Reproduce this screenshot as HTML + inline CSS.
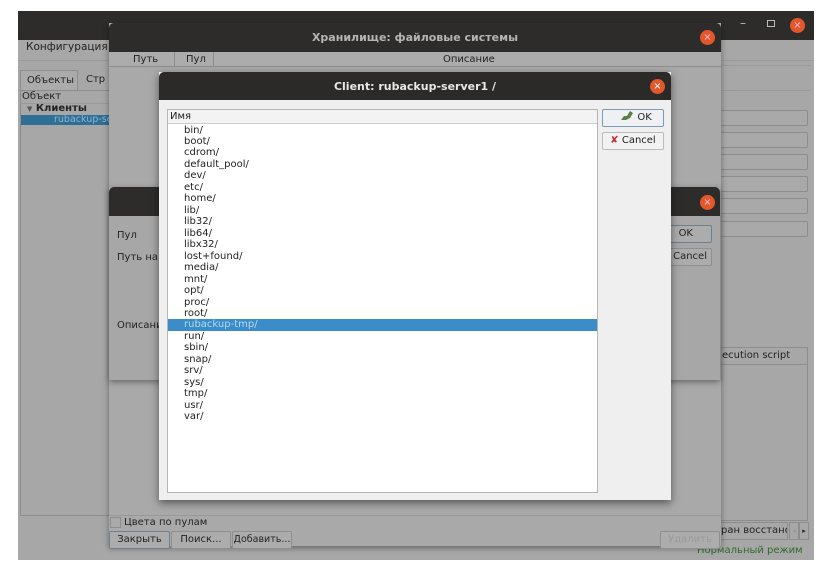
<!DOCTYPE html>
<html><head><meta charset="utf-8"><style>
*{box-sizing:border-box;margin:0;padding:0;white-space:nowrap}
body{width:828px;height:575px;background:#fff;position:relative;overflow:hidden;font-family:"DejaVu Sans","Liberation Sans",sans-serif;font-size:10px;color:#222}
.a{position:absolute}
.dark{background:#2d2c2b}
.x{position:absolute;width:15px;height:15px;border-radius:50%;background:#e3582a;color:#fbd;font-size:10px;line-height:15px;text-align:center}
.fld{position:absolute;left:718px;width:90px;height:16px;border:1px solid #8d8d8d;background:#a9a9a9;border-radius:2px}
.btn{position:absolute;height:18px;border:1px solid #8f8f8f;border-radius:2px;background:#acacac;text-align:center;line-height:16px;overflow:hidden}
.row{height:11.48px;line-height:11.48px;padding-left:16px;font-size:10px;color:#222}
</style></head><body>
<div class="a" style="left:18px;top:11px;width:796px;height:549px;background:#a7a7a7"></div>
<div class="a dark" style="left:18px;top:11px;width:796px;height:29px"></div>
<div class="a" style="left:740px;top:16px;color:#bbb;font-size:12px">–</div>
<div class="a" style="left:767px;top:20px;width:8px;height:7px;border:1px solid #bbb"></div>
<div class="x" style="left:790px;top:18px">×</div>
<div class="a" style="left:26px;top:41px;font-size:10.5px">Конфигурация</div>
<div class="a" style="left:18px;top:60px;width:796px;height:1px;background:#999"></div>
<div class="a" style="left:20px;top:70px;width:58px;height:20px;border:1px solid #8d8d8d;border-bottom:none;background:#ababab;padding:4px 0 0 6px">Объекты</div>
<div class="a" style="left:86px;top:74px">Стр</div>
<div class="a" style="left:20px;top:90px;width:90px;height:426px;border:1px solid #8d8d8d"></div>
<div class="a" style="left:22px;top:91px">Объект</div>
<div class="a" style="left:20px;top:103px;width:90px;height:1px;background:#999"></div>
<div class="a" style="left:27px;top:103px;font-weight:bold"><span style="font-size:7px;color:#555">▼</span> Клиенты</div>
<div class="a" style="left:21px;top:115px;width:89px;height:10px;background:#2f6f95;color:#8db4d0;padding-left:33px;line-height:10px;font-size:9.5px;overflow:hidden">rubackup-se</div>
<div class="a" style="left:718px;top:65px;width:92px;height:1px;background:#999"></div>
<div class="a" style="left:718px;top:90px;width:92px;height:1px;background:#999"></div>
<div class="fld" style="top:110px"></div><div class="fld" style="top:132px"></div><div class="fld" style="top:154px"></div><div class="fld" style="top:176px"></div><div class="fld" style="top:198px"></div><div class="fld" style="top:221px"></div>
<div class="a" style="left:718px;top:347px;width:90px;height:18px;border:1px solid #8d8d8d;padding:2px 0 0 3px;font-size:10px;overflow:hidden">ecution script</div>
<div class="a" style="left:718px;top:365px;width:90px;height:156px;border:1px solid #8d8d8d;border-top:none"></div>
<div class="a" style="left:718px;top:522px;width:70px;height:18px;border:1px solid #8d8d8d;padding:2px 0 0 2px;overflow:hidden">ран восстанов</div>
<div class="a" style="left:789px;top:522px;width:10px;height:18px;border:1px solid #8d8d8d;font-size:7px;color:#999;text-align:center;line-height:16px">◂</div>
<div class="a" style="left:799px;top:522px;width:10px;height:18px;border:1px solid #8d8d8d;font-size:7px;text-align:center;line-height:16px">▸</div>
<div class="a" style="left:697px;top:545px;color:#2e6b2e">Нормальный режим</div>

<div class="a" style="left:109px;top:23px;width:612px;height:523px;background:#a9a9a9;box-shadow:0 2px 6px rgba(0,0,0,.4)"></div>
<div class="a dark" style="left:109px;top:23px;width:612px;height:29px;border-radius:5px 5px 0 0"></div>
<div class="a" style="left:109px;top:31px;width:612px;text-align:center;color:#b5b5b5;font-weight:bold;font-size:11px">Хранилище: файловые системы</div>
<div class="x" style="left:700px;top:30px">×</div>
<div class="a" style="left:109px;top:52px;width:612px;height:15px;background:#acacac;border-bottom:1px solid #8d8d8d"></div>
<div class="a" style="left:133px;top:54px">Путь</div>
<div class="a" style="left:174px;top:52px;width:1px;height:15px;background:#8d8d8d"></div>
<div class="a" style="left:186px;top:54px">Пул</div>
<div class="a" style="left:213px;top:52px;width:1px;height:15px;background:#8d8d8d"></div>
<div class="a" style="left:443px;top:54px">Описание</div>
<div class="a" style="left:109px;top:515px;width:612px;height:1px;background:#999"></div>
<div class="a" style="left:110px;top:517px;width:11px;height:11px;border:1px solid #8d8d8d"></div>
<div class="a" style="left:124px;top:517px">Цвета по пулам</div>
<div class="btn" style="left:109px;top:531px;width:61px;border-color:#6f7f8c">Закрыть</div>
<div class="btn" style="left:171px;top:531px;width:60px">Поиск...</div>
<div class="btn" style="left:232px;top:531px;width:60px;font-size:9.5px">Добавить...</div>
<div class="btn" style="left:660px;top:531px;width:60px;color:#999">Удалить</div>

<div class="a" style="left:109px;top:187px;width:611px;height:193px;background:#a7a7a7;box-shadow:0 2px 6px rgba(0,0,0,.4)"></div>
<div class="a dark" style="left:109px;top:187px;width:611px;height:29px;border-radius:5px 5px 0 0"></div>
<div class="x" style="left:700px;top:195px">×</div>
<div class="a" style="left:117px;top:230px">Пул</div>
<div class="a" style="left:117px;top:252px">Путь на</div>
<div class="a" style="left:117px;top:320px">Описани</div>
<div class="btn" style="left:655px;top:225px;width:57px;border-color:#6f7f8c;text-align:right;padding-right:18px">OK</div>
<div class="btn" style="left:655px;top:248px;width:57px;text-align:right;padding-right:4px">Cancel</div>

<div class="a" style="left:159px;top:72px;width:512px;height:428px;background:#efefef;box-shadow:0 3px 8px rgba(0,0,0,.5)"></div>
<div class="a" style="left:159px;top:72px;width:512px;height:28px;background:#2b2a29;border-radius:5px 5px 0 0"></div>
<div class="a" style="left:159px;top:80px;width:512px;text-align:center;color:#e8e8e8;font-weight:bold;font-size:11px">Client: rubackup-server1 /</div>
<div class="x" style="left:650px;top:79px;color:#fff">×</div>
<div class="a" style="left:167px;top:109px;width:431px;height:384px;background:#fff;border:1px solid #b5b5b5"></div>
<div class="a" style="left:168px;top:110px;width:429px;height:14px;background:#f3f3f3;border-bottom:1px solid #ccc;padding:1px 0 0 2px">Имя</div>
<div class="a" style="left:168px;top:124.5px;width:429px">
<div class="row">bin/</div>
<div class="row">boot/</div>
<div class="row">cdrom/</div>
<div class="row">default_pool/</div>
<div class="row">dev/</div>
<div class="row">etc/</div>
<div class="row">home/</div>
<div class="row">lib/</div>
<div class="row">lib32/</div>
<div class="row">lib64/</div>
<div class="row">libx32/</div>
<div class="row">lost+found/</div>
<div class="row">media/</div>
<div class="row">mnt/</div>
<div class="row">opt/</div>
<div class="row">proc/</div>
<div class="row">root/</div>
<div class="row" style="background:#3a8dc9;color:#b8d8ef">rubackup-tmp/</div>
<div class="row">run/</div>
<div class="row">sbin/</div>
<div class="row">snap/</div>
<div class="row">srv/</div>
<div class="row">sys/</div>
<div class="row">tmp/</div>
<div class="row">usr/</div>
<div class="row">var/</div>
</div>
<div class="btn" style="left:602px;top:109px;width:62px;background:#eef0f3;border-color:#7d9bb5;padding-left:6px">
<svg width="14" height="12" viewBox="0 0 14 12" style="vertical-align:-2px"><path d="M1 10 L4 6 L7 6 L10 1 L13 3 L10 8 L6 10 Z" fill="#5c7f45"/></svg> OK</div>
<div class="btn" style="left:602px;top:132px;width:62px;background:#f2f2f2;border-color:#bbb">
<span style="color:#b33;font-weight:bold">✘</span> Cancel</div>
</body></html>
